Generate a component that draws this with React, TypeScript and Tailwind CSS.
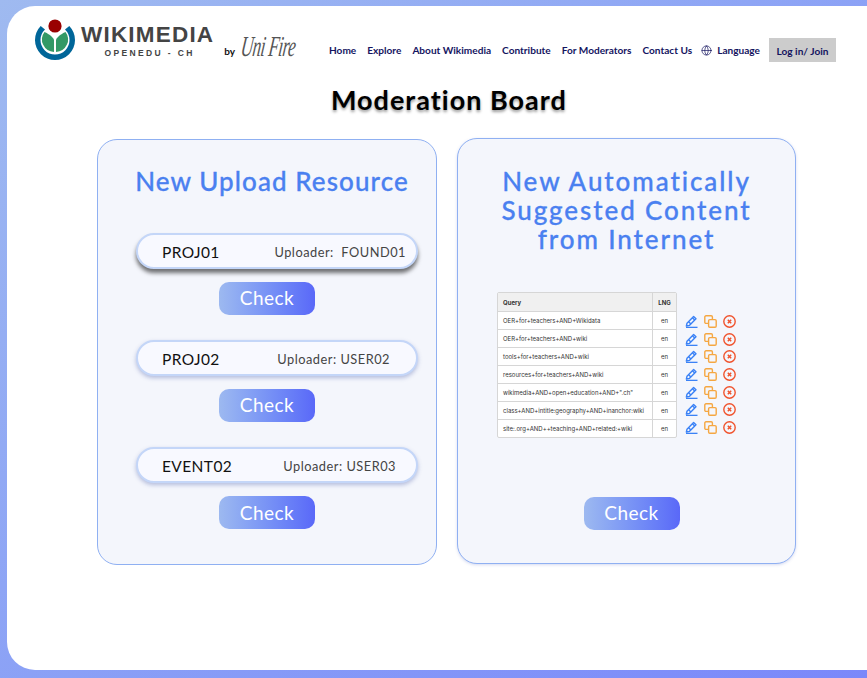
import React from 'react';
import { Globe } from 'lucide-react';

const NAV = ['Home', 'Explore', 'About Wikimedia', 'Contribute', 'For Moderators', 'Contact Us'];

const UPLOADS = [
    { name: 'PROJ01', uploader: 'Uploader:  FOUND01', shadow: 'shadow-[0_4px_4px_rgba(0,0,0,0.55)]', nameGap: 'pr-[10px]' },
    { name: 'PROJ02', uploader: 'Uploader: USER02', shadow: 'shadow-[0_2px_4px_rgba(60,80,160,0.35)]', nameGap: 'pr-[26px]' },
    { name: 'EVENT02', uploader: 'Uploader: USER03', shadow: 'shadow-[0_2px_4px_rgba(60,80,160,0.35)]', nameGap: 'pr-[20px]' },
];

const QUERIES = [
    'OER+for+teachers+AND+Wikidata',
    'OER+for+teachers+AND+wiki',
    'tools+for+teachers+AND+wiki',
    'resources+for+teachers+AND+wiki',
    'wikimedia+AND+open+education+AND+".ch"',
    'class+AND+intitle:geography+AND+inanchor:wiki',
    'site:.org+AND++teaching+AND+related:+wiki',
];

const Logo = () => (
    <svg width="40" height="41" viewBox="0 0 40 41" className="shrink-0">
        <circle cx="20" cy="7" r="6.6" fill="#990000" />
        <path d="M9.5 13 C12 14 17 17 19 20.5 L19 33 A12.5 12.5 0 0 1 9.5 13 Z" fill="#339966" />
        <path d="M30.5 13 C28 14 23 17 21 20.5 L21 33 A12.5 12.5 0 0 0 30.5 13 Z" fill="#339966" />
        <path d="M5.7 7 A20 20 0 1 0 34.3 7 L30 10.5 A14.5 14.5 0 1 1 10 10.5 Z" fill="#006699" />
    </svg>
);

const EditIcon = () => (
    <svg width="13" height="13" viewBox="0 0 13 13" fill="none" stroke="#3b82f6" strokeWidth="1.4">
        <path d="M2 8.2 L8.6 1.4 L11 3.7 L4.3 10.4 L1.4 11 Z" strokeLinejoin="round" />
        <path d="M3.6 6.7 L5.9 9 M7.4 2.7 L9.7 5" />
        <path d="M1 12.4 H12.5" />
    </svg>
);

const CopyIcon = () => (
    <svg width="13" height="13" viewBox="0 0 13 13" fill="none" stroke="#f5a742" strokeWidth="1.4">
        <rect x="0.8" y="0.8" width="7.6" height="7.6" rx="1.2" />
        <rect x="4.6" y="4.6" width="7.6" height="7.6" rx="1.2" fill="#f4f6fc" />
    </svg>
);

const RemoveIcon = () => (
    <svg width="13" height="13" viewBox="0 0 13 13" fill="none" stroke="#f0532d">
        <circle cx="6.5" cy="6.5" r="5.7" strokeWidth="1.4" />
        <path d="M4.8 4.8 L8.2 8.2 M8.2 4.8 L4.8 8.2" strokeWidth="1.5" />
    </svg>
);

const CheckButton = () => (
    <button className="w-[96px] h-[33px] rounded-[10px] bg-gradient-to-r from-[#9db9f0] to-[#5a68f8] text-white text-[19px] tracking-[0.5px] font-['Lato',sans-serif]">
        Check
    </button>
);

const App: React.FC = () => {
    return (
        <div className="w-[867px] h-[678px] overflow-hidden pt-[6px] pb-[8px] pl-[7px] bg-gradient-to-br from-[#9fbaf0] to-[#7a88fa] font-['Lato',sans-serif]">
            <div className="h-full bg-white rounded-l-[28px] flex flex-col">
                {/* Header */}
                <header className="flex items-start h-[66px] pl-[28px] pr-[31px]">
                    <div className="flex items-start gap-[6px] mt-[13px]">
                        <Logo />
                        <div className="flex flex-col items-center mt-[4px] font-['Liberation_Sans',sans-serif] font-bold text-[#444444]">
                            <span className="text-[22.5px] leading-[24px] tracking-[1.2px]">WIKIMEDIA</span>
                            <span className="text-[8.5px] leading-[11px] mt-[1px] ml-[4px] tracking-[2.35px]">OPENEDU - CH</span>
                        </div>
                    </div>
                    <div className="flex items-center ml-[10px] mt-[26px]">
                        <span className="text-[10px] font-bold text-[#111111] mt-[9px]">by</span>
                        <span className="ml-[6px] text-[17px] leading-[30px] italic font-['Liberation_Serif',serif] text-[#555555] -skew-x-12 scale-y-[1.7] tracking-[-0.5px] whitespace-nowrap">Uni Fire</span>
                    </div>
                    <nav className="flex items-center ml-auto mt-[32px] text-[10.1px] font-bold text-[#14145f] whitespace-nowrap">
                        <div className="flex items-center gap-[11px] pt-[2px]">
                            {NAV.map((item) => (
                                <span key={item}>{item}</span>
                            ))}
                        </div>
                        <Globe size={11} strokeWidth={1.5} className="ml-[9px] mt-[1px]" />
                        <span className="ml-[5px] pt-[2px]">Language</span>
                        <span className="ml-[9px] w-[67px] h-[24px] pt-[3px] bg-[#cccccc] flex items-center justify-center">Log in/ Join</span>
                    </nav>
                </header>

                <h1 className="ml-[324px] mt-[12px] text-[27px] leading-[32px] font-bold tracking-[1px] text-black whitespace-nowrap [text-shadow:0_2px_3px_rgba(0,0,0,0.4)]">
                    Moderation Board
                </h1>

                <main className="flex gap-[20px] ml-[90px] mt-[22px]">
                    {/* Upload column */}
                    <section className="w-[340px] h-[426px] mt-[1px] rounded-[20px] border border-[#8fb0f2] bg-[#f4f6fc] flex flex-col items-center pt-[24px]">
                        <h2 className="ml-[10px] text-[#4a80f0] text-[26px] leading-[34px] font-medium tracking-[1.07px] whitespace-nowrap [-webkit-text-stroke:0.3px_#4a80f0]">New Upload Resource</h2>
                        <div className="flex flex-col items-center gap-[25.2px] mt-[35px]">
                            {UPLOADS.map((row) => (
                                <div key={row.name} className="flex flex-col items-center gap-[13px]">
                                    <div className={`ml-[20px] w-[282px] h-[36px] pt-[3px] rounded-[18px] border-2 border-[#c4d6f8] bg-[#f8f9ff] flex items-center justify-between pl-[24px] ${row.nameGap} ${row.shadow}`}>
                                        <span className="text-[15.5px] text-[#111111] tracking-[0.4px]">{row.name}</span>
                                        <span className="text-[12.8px] text-[#444444] tracking-[0.5px] whitespace-pre">{row.uploader}</span>
                                    </div>
                                    <CheckButton />
                                </div>
                            ))}
                        </div>
                    </section>

                    {/* Suggested content column */}
                    <section className="w-[339px] h-[426px] rounded-[20px] border border-[#8fb0f2] bg-[#f4f6fc] flex flex-col items-center pt-[28px] shadow-[0_1px_3px_rgba(90,110,200,0.25)]">
                        <h2 className="text-[#4a80f0] text-[26px] leading-[29px] font-medium tracking-[1.9px] text-center whitespace-nowrap [-webkit-text-stroke:0.3px_#4a80f0]">
                            New Automatically<br />Suggested Content<br />from Internet
                        </h2>
                        <div className="flex items-start mt-[38px] -ml-[20px]">
                            <table className="w-[180px] table-fixed border-separate border-spacing-0 rounded-[2px] border border-[#d6d6d6] bg-white text-[6px] text-[#333333] font-['Inter',sans-serif]">
                                <thead>
                                    <tr className="h-[18px] bg-[#f0f0f0] font-bold">
                                        <th className="w-[155px] text-left pl-[5px] border-r border-[#d6d6d6]">Query</th>
                                        <th className="text-center">LNG</th>
                                    </tr>
                                </thead>
                                <tbody>
                                    {QUERIES.map((q) => (
                                        <tr key={q} className="h-[18px]">
                                            <td className="pl-[5px] border-t border-r border-[#d6d6d6] whitespace-nowrap overflow-hidden">{q}</td>
                                            <td className="text-center border-t border-[#d6d6d6]">en</td>
                                        </tr>
                                    ))}
                                </tbody>
                            </table>
                            <div className="flex flex-col gap-[4.67px] ml-[8px] mt-[23px]">
                                {QUERIES.map((q) => (
                                    <div key={q} className="flex items-center gap-[6px]">
                                        <EditIcon />
                                        <CopyIcon />
                                        <RemoveIcon />
                                    </div>
                                ))}
                            </div>
                        </div>
                        <div className="mt-[59px] ml-[10px]">
                            <CheckButton />
                        </div>
                    </section>
                </main>
            </div>
        </div>
    );
};

export default App;
